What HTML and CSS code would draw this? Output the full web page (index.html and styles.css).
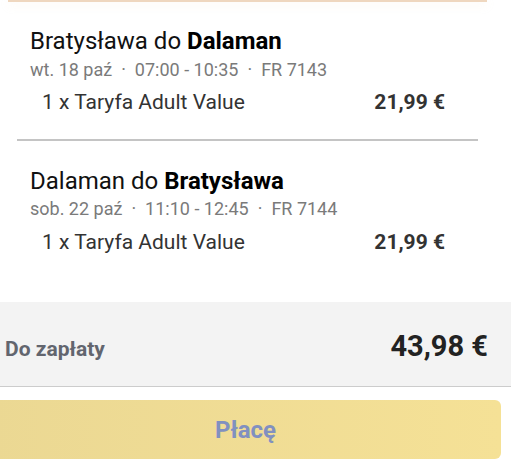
FILE: index.html
```html
<!DOCTYPE html>
<html lang="pl">
<head>
<meta charset="utf-8">
<link rel="stylesheet" href="styles.css">
</head>
<body>
<div class="top-edge"></div>
<section class="segment first">
  <h2 class="route">Bratysława do <b>Dalaman</b></h2>
  <div class="meta">wt. 18 paź<span class="dot">·</span>07:00 - 10:35<span class="dot">·</span>FR 7143</div>
  <div class="fare"><span>1 x Taryfa Adult Value</span><span class="price">21,99 €</span></div>
</section>
<div class="divider"></div>
<section class="segment second">
  <h2 class="route">Dalaman do <b>Bratysława</b></h2>
  <div class="meta">sob. 22 paź<span class="dot">·</span>11:10 - 12:45<span class="dot">·</span>FR 7144</div>
  <div class="fare"><span>1 x Taryfa Adult Value</span><span class="price">21,99 €</span></div>
</section>
<div class="total">
  <span class="total-label">Do zapłaty</span>
  <span class="total-amount">43,98 €</span>
</div>
<button class="pay">Płacę</button>
</body>
</html>
```
FILE: styles.css
```css
html, body {
  margin: 0;
  padding: 0;
  background: #ffffff;
  font-family: Roboto, "Noto Sans", Arial, sans-serif;
  overflow: hidden;
}
body {
  width: 511px;
  height: 464px;
}
.top-edge {
  height: 2px;
  margin: 0 24px 0 8px;
  background: #efd7bf;
  box-shadow: 0 3px 8px rgba(245, 215, 170, 0.25);
}
.segment {
  padding: 0 66px 0 30px;
}
.segment.first {
  padding-top: 25px;
}
.segment.second {
  padding-top: 25.3px;
}
.route {
  margin: 0;
  font-size: 24px;
  line-height: 28px;
  font-weight: 400;
  color: #111111;
}
.route b {
  font-weight: 700;
  color: #000000;
}
.meta {
  margin-top: 3.5px;
  font-size: 18px;
  line-height: 21px;
  color: #7a7a7a;
}
.dot {
  display: inline-block;
  margin: 0 9px;
}
.fare {
  display: flex;
  justify-content: space-between;
  margin-top: 10.3px;
  padding-left: 12px;
  font-size: 21px;
  line-height: 25px;
  color: #333333;
}
.price {
  font-weight: 700;
}
.divider {
  height: 2px;
  margin: 24.7px 33px 0 17px;
  background: #c4c4c4;
}
.total {
  display: flex;
  justify-content: space-between;
  align-items: baseline;
  margin-top: 47.7px;
  height: 85px;
  box-sizing: border-box;
  padding: 27px 23px 0 5px;
  background: #f3f3f3;
  border-bottom: 1px solid #cccccc;
}
.total-label {
  font-size: 21px;
  line-height: 25px;
  font-weight: 700;
  color: #62656e;
}
.total-amount {
  font-size: 29px;
  line-height: 34px;
  font-weight: 700;
  color: #222222;
}
.pay {
  display: block;
  margin: 13px 0 0 -10px;
  width: 511px;
  height: 59px;
  border: none;
  border-radius: 6px;
  background: linear-gradient(to right, #ebd893, #f5e196);
  font-family: Roboto, "Noto Sans", Arial, sans-serif;
  font-size: 24px;
  font-weight: 700;
  color: #8190c0;
  padding: 0;
}
```
